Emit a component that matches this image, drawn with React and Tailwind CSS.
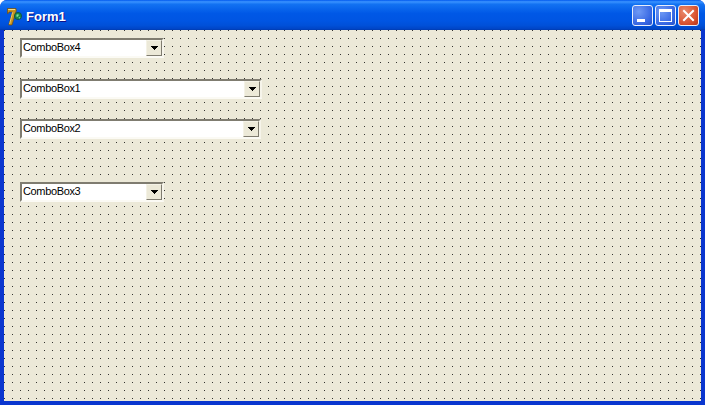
function ComboBox({ label, width, className }) {
  return (
    <div className={`flex h-5 border-2 border-t-[#7f7c70] border-l-[#7f7c70] border-r-[#f6f4ea] border-b-[#fbfaf4] bg-white ${width} ${className}`}>
      <div className="flex-1 pl-[1px] text-[11px] leading-[14px] text-black font-['Liberation_Sans',sans-serif] tracking-[-0.35px]">{label}</div>
      <div className="flex w-[16px] items-center justify-center border border-t-[#f4f2e6] border-l-[#f4f2e6] border-r-[#7f7c70] border-b-[#7f7c70] bg-[#ece9d8]">
        <svg width="7" height="4" viewBox="0 0 7 4" shapeRendering="crispEdges">
          <path d="M0 0h7v1h-1v1h-1v1h-1v1h-1v-1h-1v-1h-1v-1h-1z" fill="#000" />
        </svg>
      </div>
    </div>
  );
}

function DelphiIcon() {
  return (
    <svg width="16" height="18" viewBox="0 0 16 18">
      <path d="M0.5 0.5h8.5l.3 2.2-4.3 14.3H1.7L5.6 4H2L1.2 5.6H0.5z" fill="#c8941f" stroke="#6e4c10" strokeWidth="0.7" />
      <path d="M1.2 1.5h7" stroke="#f5dc86" strokeWidth="1" />
      <path d="M5.7 4.2L2.6 16" stroke="#f0cc68" strokeWidth="1" />
      <circle cx="11" cy="8" r="3.6" fill="#17854a" stroke="#0c4a34" strokeWidth="0.7" />
      <path d="M9.3 6.8c.9-.9 1.9-.9 2.7 0l-1 1.8-1.3.4zM11.5 9.6l1.5-.7.3.9-1.1.9z" fill="#7fe39a" />
    </svg>
  );
}

function CaptionButton({ children, className }) {
  return (
    <div className={`flex h-[21px] w-[21px] rounded-[3px] border border-[#e8eefc] p-[2px] ${className}`}>
      {children}
    </div>
  );
}

export default function App() {
  return (
    <div className="flex h-[405px] w-[705px] flex-col overflow-hidden rounded-t-[7px] bg-[#0a36cf] font-['Liberation_Sans',sans-serif]">
      <div className="flex h-[30px] bg-[linear-gradient(180deg,#0058ee_0%,#3a93ff_6%,#1272f2_14%,#0058e6_45%,#0055e2_70%,#0050d8_85%,#0046c8_95%,#003bb0_100%)] pl-[7px] pr-[6px]">
        <div className="mt-[8px]">
          <DelphiIcon />
        </div>
        <span className="ml-[3px] mt-[9px] text-[13px] leading-[16px] font-bold text-white [text-shadow:1px_1px_0_#0f1089]">Form1</span>
        <div className="ml-auto mt-[5px] flex gap-[2px]">
          <CaptionButton className="items-end bg-[radial-gradient(circle_at_30%_30%,#6f9af5,#3565e2_70%,#2450c8)]">
            <div className="mb-[1px] ml-[2px] h-[3px] w-[8px] bg-white" />
          </CaptionButton>
          <CaptionButton className="bg-[radial-gradient(circle_at_30%_30%,#6f9af5,#3565e2_70%,#2450c8)]">
            <div className="m-[1px] flex-1 border border-t-[3px] border-white" />
          </CaptionButton>
          <CaptionButton className="bg-[radial-gradient(circle_at_30%_30%,#ea8a6c,#d8512e_65%,#b5331a)]">
            <svg width="15" height="15" viewBox="0 0 15 15">
              <path d="M3 3l9 9M12 3l-9 9" stroke="#fff" strokeWidth="2" strokeLinecap="square" />
            </svg>
          </CaptionButton>
        </div>
      </div>
      <div className="ml-[4px] mr-[4px] mb-[4px] flex flex-1 flex-col items-start bg-[#ece9d8] bg-[radial-gradient(circle_at_0.5px_0.5px,#333330_0.7px,transparent_0.7px)] bg-[size:8px_8px] pl-[16px] pt-[8px]">
        <ComboBox label="ComboBox4" width="w-[144px]" />
        <ComboBox label="ComboBox1" width="w-[242px]" className="mt-[21px]" />
        <ComboBox label="ComboBox2" width="w-[241px]" className="mt-[20px]" />
        <ComboBox label="ComboBox3" width="w-[144px]" className="mt-[43px]" />
      </div>
    </div>
  );
}
